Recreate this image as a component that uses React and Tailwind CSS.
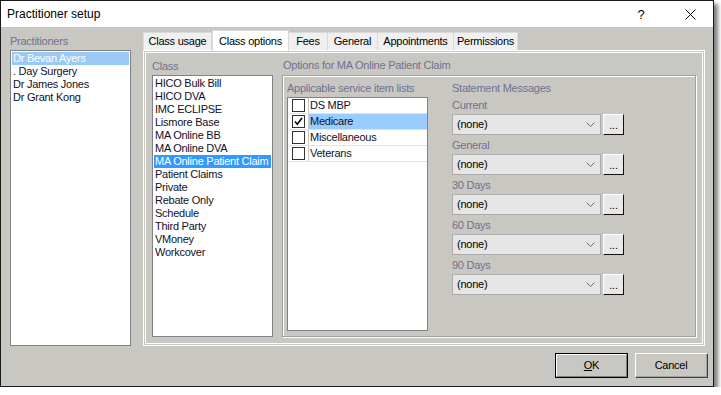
import React from "react";

const practitioners = ["Dr Bevan Ayers", ". Day Surgery", "Dr James Jones", "Dr Grant Kong"];
const classes = [
  "HICO Bulk Bill",
  "HICO DVA",
  "IMC ECLIPSE",
  "Lismore Base",
  "MA Online BB",
  "MA Online DVA",
  "MA Online Patient Claim",
  "Patient Claims",
  "Private",
  "Rebate Only",
  "Schedule",
  "Third Party",
  "VMoney",
  "Workcover",
];
const serviceLists = [
  { name: "DS MBP", checked: false },
  { name: "Medicare", checked: true, sel: true },
  { name: "Miscellaneous", checked: false },
  { name: "Veterans", checked: false },
];
const statements = ["Current", "General", "30 Days", "60 Days", "90 Days"];

const tabs = [
  { label: "Class usage", w: "w-[69px]" },
  { label: "Class options", w: "w-[77px]", sel: true },
  { label: "Fees", w: "w-[40px]" },
  { label: "General", w: "w-[51px]" },
  { label: "Appointments", w: "w-[77px]" },
  { label: "Permissions", w: "w-[65px]" },
];

function Combo() {
  return (
    <div className="flex gap-[2px]">
      <div className="w-[149px] h-[21px] bg-[#e5e5e5] border border-[#adadad] flex items-center pl-[4px] pr-[5px] justify-between">
        <span className="text-[#000]">(none)</span>
        <svg width="9" height="5" viewBox="0 0 9 5">
          <polyline points="0.5,0.5 4.5,4.5 8.5,0.5" fill="none" stroke="#707070" strokeWidth="1" />
        </svg>
      </div>
      <div className="w-[21px] h-[21px] bg-[#e8e8e8] border-t border-l border-t-white border-l-white border-r border-b border-r-[#111] border-b-[#111] flex items-end justify-center pb-[3px] leading-none text-[#000]">
        ...
      </div>
    </div>
  );
}

export default function App() {
  return (
    <div
      className="w-[714px] h-[387px] border border-[#1a1a1a] bg-[#c9c7c2] shadow-[4px_4px_4px_rgba(0,0,0,0.5)] flex flex-col text-[11px] leading-[13px] tracking-[-0.25px] text-[#10102a]"
      style={{ fontFamily: '"Liberation Sans", Arial, sans-serif' }}
    >
      {/* Title bar */}
      <div className="h-[26px] bg-white flex items-center pl-[6px] shrink-0 tracking-normal">
        <span className="text-[12px] text-black flex-1">Practitioner setup</span>
        <span className="text-[13px] text-black w-[12px] text-center mr-[38px]">?</span>
        <svg width="11" height="11" viewBox="0 0 11 11" className="mr-[17px]">
          <path d="M0.5 0.5 L10.5 10.5 M10.5 0.5 L0.5 10.5" stroke="#000" strokeWidth="1" />
        </svg>
      </div>

      {/* Body */}
      <div className="flex-1 flex flex-col pt-[3px] pl-[9px] pr-[7px]">
        <div className="flex h-[316px] gap-[12px]">
          {/* Practitioners */}
          <div className="w-[121px] pt-[5px] flex flex-col">
            <div className="text-[#6d7291] h-[13px]">Practitioners</div>
            <div className="mt-[2px] h-[296px] bg-white border border-[#7f8389] pt-[1px] px-[1px]">
              {practitioners.map((p, i) => (
                <div
                  key={p}
                  className={
                    "h-[13px] pl-[1px] whitespace-nowrap " +
                    (i === 0 ? "bg-[#99c9f5] text-white" : "")
                  }
                >
                  {p}
                </div>
              ))}
            </div>
          </div>

          {/* Tab control */}
          <div className="w-[562px] flex flex-col">
            <div className="h-[20px] flex items-end">
              {tabs.map((t) =>
                t.sel ? (
                  <div
                    key={t.label}
                    className={t.w + " h-[21px] bg-white border border-b-0 border-[#d9d9d9] flex items-center justify-center text-black -mb-[1px] relative"}
                  >
                    {t.label}
                  </div>
                ) : (
                  <div
                    key={t.label}
                    className={t.w + " h-[18px] bg-[#f0f0f0] border border-b-0 border-[#d9d9d9] -ml-[1px] first:ml-0 flex items-center justify-center text-black"}
                  >
                    {t.label}
                  </div>
                )
              )}
            </div>
            <div className="h-[296px] border-[3px] border-double border-white pt-[7px] pl-[6px] pr-[6px] flex gap-[9px]">
              {/* Class list */}
              <div className="w-[121px] flex flex-col">
                <div className="text-[#6d7291] h-[13px]">Class</div>
                <div className="mt-[2px] h-[262px] bg-white border border-[#7f8389] pt-[1px] px-[1px]">
                  {classes.map((c) => (
                    <div
                      key={c}
                      className={
                        "h-[13px] pl-[1px] whitespace-nowrap " +
                        (c === "MA Online Patient Claim" ? "bg-[#3399ff] text-white" : "")
                      }
                    >
                      {c}
                    </div>
                  ))}
                </div>
              </div>

              {/* Options */}
              <div className="w-[414px] flex flex-col">
                <div className="text-[#6d7291] h-[13px] pl-[1px] -mt-[1px] mb-[1px]">Options for MA Online Patient Claim</div>
                <div className="mt-[2px] h-[262px] border border-[#a0a0a0] shadow-[1px_1px_0_#ffffff,inset_1px_1px_0_#ffffff] pt-[6px] pl-[4px] pb-[5px] flex gap-[24px]">
                  {/* service lists */}
                  <div className="w-[141px] flex flex-col">
                    <div className="text-[#6d7291] h-[13px]">Applicable service item lists</div>
                    <div className="mt-[2px] flex-1 bg-white border border-[#7f8389]">
                      {serviceLists.map((s) => (
                        <div key={s.name} className="h-[16px] flex border-b border-[#e3e3e3]">
                          <div className="w-[21px] border-r border-[#c8c8c8] flex items-center justify-center pl-[1px]">
                            <div className="w-[13px] h-[13px] border border-[#333] bg-white flex items-center justify-center">
                              {s.checked && (
                                <svg width="11" height="11" viewBox="0 0 11 11">
                                  <path d="M2 5.5 L4.3 8.2 L9 2" fill="none" stroke="#000" strokeWidth="1.6" />
                                </svg>
                              )}
                            </div>
                          </div>
                          <div
                            className={
                              "flex-1 pl-[1px] flex items-center whitespace-nowrap " +
                              (s.sel ? "bg-[#99ccff]" : "")
                            }
                          >
                            {s.name}
                          </div>
                        </div>
                      ))}
                    </div>
                  </div>

                  {/* statement messages */}
                  <div className="flex flex-col">
                    <div className="text-[#6d7291] h-[13px]">Statement Messages</div>
                    {statements.map((s) => (
                      <div key={s} className="mt-[4px] flex flex-col">
                        <div className="text-[#6d7291] h-[13px]">{s}</div>
                        <div className="mt-[2px]">
                          <Combo />
                        </div>
                      </div>
                    ))}
                  </div>
                </div>
              </div>
            </div>
          </div>
        </div>

        {/* Buttons */}
        <div className="mt-[7px] flex justify-end gap-[7px] -mr-[2px]">
          <div className="w-[73px] h-[25px] border border-black flex">
            <div className="flex-1 border-t border-l border-t-white border-l-white border-r border-b border-r-[#808080] border-b-[#808080] flex items-center justify-center text-black">
              <span>
                <span className="underline">O</span>K
              </span>
            </div>
          </div>
          <div className="w-[73px] h-[25px] border-t border-l border-t-white border-l-white border-r border-b border-r-[#404040] border-b-[#404040] flex">
            <div className="flex-1 border-r border-b border-r-[#a0a0a0] border-b-[#a0a0a0] flex items-center justify-center text-black">
              Cancel
            </div>
          </div>
        </div>
      </div>
    </div>
  );
}
